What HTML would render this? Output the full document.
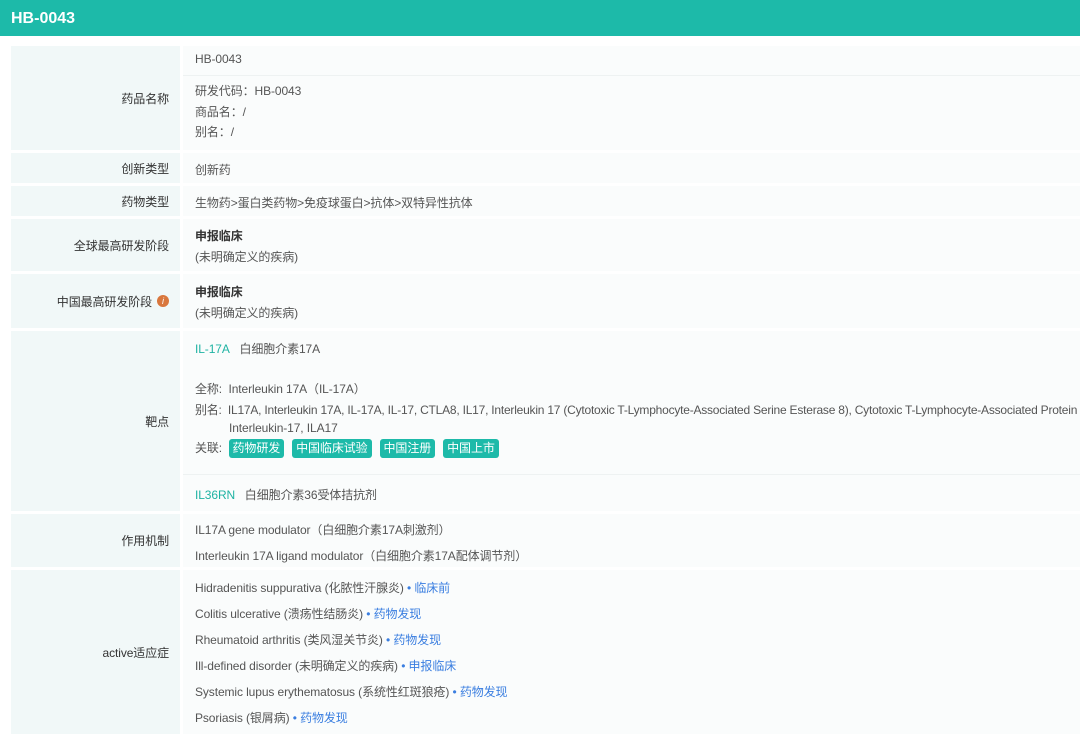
<!DOCTYPE html><html><head><meta charset="utf-8"><style>
*{margin:0;padding:0;box-sizing:border-box}
body{width:1080px;height:734px;overflow:hidden;background:#fff;font-family:"Liberation Sans","Noto Sans CJK SC",sans-serif;font-size:12px;color:#555;letter-spacing:-0.1px}
.hd{position:absolute;left:0;top:0;width:1080px;height:36px;background:#1dbaa9;color:#fff;font-weight:bold;font-size:16px;line-height:37px;padding-left:11px;letter-spacing:0}
.r{position:absolute;left:11px;width:1069px}
.l{position:absolute;left:0;top:0;bottom:0;width:169px;background:#f1f8f8;text-align:right;padding-right:11px;display:flex;align-items:center;justify-content:flex-end;color:#333}
.v{position:absolute;left:172px;top:0;bottom:0;right:0;background:#fafcfc}
.t{position:absolute;left:195px;white-space:nowrap}
.g{color:#1fb3a3}.b{color:#3a7ee0}
.tag{display:inline-block;background:#1dbaa9;color:#fff;border-radius:3px;padding:0 4px;height:19px;line-height:19px;margin-right:8px}
</style></head><body>
<div class="hd">HB-0043</div>
<div class="r" style="top:46px;height:104px"><div class="l">药品名称</div><div class="v"></div></div>
<div class="r" style="top:153px;height:30px"><div class="l">创新类型</div><div class="v"></div></div>
<div class="r" style="top:186px;height:30px"><div class="l">药物类型</div><div class="v"></div></div>
<div class="r" style="top:219px;height:52px"><div class="l">全球最高研发阶段</div><div class="v"></div></div>
<div class="r" style="top:274px;height:54px"><div class="l">中国最高研发阶段 <span style="display:inline-block;width:12px;height:12px;border-radius:50%;background:#d9773d;color:#fff;font-size:9px;line-height:12px;text-align:center;margin-left:5px;font-style:italic">i</span></div><div class="v"></div></div>
<div class="r" style="top:331px;height:180px"><div class="l">靶点</div><div class="v"></div></div>
<div class="r" style="top:514px;height:53px"><div class="l">作用机制</div><div class="v"></div></div>
<div class="r" style="top:570px;height:164px"><div class="l">active适应症</div><div class="v"></div></div>
<div class="t" style="top:52px">HB-0043</div>
<div style="position:absolute;left:183px;top:75px;width:897px;height:1px;background:#eef2f2"></div>
<div class="t" style="top:82px">研发代码：HB-0043</div>
<div class="t" style="top:103px">商品名：/</div>
<div class="t" style="top:123px">别名：/</div>
<div class="t" style="top:161px">创新药</div>
<div class="t" style="top:194px">生物药&gt;蛋白类药物&gt;免疫球蛋白&gt;抗体&gt;双特异性抗体</div>
<div class="t" style="top:227px;font-weight:bold;color:#333">申报临床</div>
<div class="t" style="top:248px">(未明确定义的疾病)</div>
<div class="t" style="top:283px;font-weight:bold;color:#333">申报临床</div>
<div class="t" style="top:304px">(未明确定义的疾病)</div>
<div class="t" style="top:340px"><span class="g">IL-17A</span>&nbsp;&nbsp; 白细胞介素17A</div>
<div class="t" style="top:380px">全称:&nbsp; Interleukin 17A（IL-17A）</div>
<div class="t" style="top:401px;letter-spacing:-0.22px">别名:&nbsp; IL17A, Interleukin 17A, IL-17A, IL-17, CTLA8, IL17, Interleukin 17 (Cytotoxic T-Lymphocyte-Associated Serine Esterase 8), Cytotoxic T-Lymphocyte-Associated Protein 8,</div>
<div class="t" style="top:421px;left:229px">Interleukin-17, ILA17</div>
<div class="t" style="top:439px">关联:&nbsp; <span class="tag">药物研发</span><span class="tag">中国临床试验</span><span class="tag">中国注册</span><span class="tag">中国上市</span></div>
<div style="position:absolute;left:183px;top:474px;width:897px;height:1px;background:#eef2f2"></div>
<div class="t" style="top:486px"><span class="g">IL36RN</span>&nbsp;&nbsp; 白细胞介素36受体拮抗剂</div>
<div class="t" style="top:521px">IL17A gene modulator（白细胞介素17A刺激剂）</div>
<div class="t" style="top:547px">Interleukin 17A ligand modulator（白细胞介素17A配体调节剂）</div>
<div class="t" style="top:579px">Hidradenitis suppurativa (化脓性汗腺炎) <span class="b">• 临床前</span></div>
<div class="t" style="top:605px">Colitis ulcerative (溃疡性结肠炎) <span class="b">• 药物发现</span></div>
<div class="t" style="top:631px">Rheumatoid arthritis (类风湿关节炎) <span class="b">• 药物发现</span></div>
<div class="t" style="top:657px">Ill-defined disorder (未明确定义的疾病) <span class="b">• 申报临床</span></div>
<div class="t" style="top:683px">Systemic lupus erythematosus (系统性红斑狼疮) <span class="b">• 药物发现</span></div>
<div class="t" style="top:709px">Psoriasis (银屑病) <span class="b">• 药物发现</span></div>
</body></html>
